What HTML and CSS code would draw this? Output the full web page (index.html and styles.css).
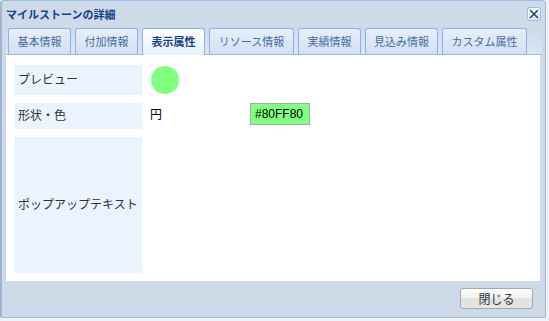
FILE: index.html
```html
<!DOCTYPE html>
<html lang="ja">
<head>
<meta charset="utf-8">
<link rel="stylesheet" href="styles.css">
</head>
<body>
<div class="dialog">
  <div class="titlebar">
    <span class="title">マイルストーンの詳細</span>
    <span class="close"><svg width="10" height="10" viewBox="0 0 10 10"><path d="M1 1 L9 9 M9 1 L1 9" stroke="#15428b" stroke-width="1.6" fill="none"/></svg></span>
  </div>
  <div class="tabs">
    <div class="tab">基本情報</div>
    <div class="tab">付加情報</div>
    <div class="tab active">表示属性</div>
    <div class="tab wide">リソース情報</div>
    <div class="tab">実績情報</div>
    <div class="tab mid">見込み情報</div>
    <div class="tab wide">カスタム属性</div>
  </div>
  <div class="panel">
    <div class="row r1">
      <div class="label">プレビュー</div>
      <div class="value"><span class="circle"></span></div>
    </div>
    <div class="row r2">
      <div class="label">形状・色</div>
      <div class="value"><span class="shape">円</span><span class="swatch">#80FF80</span></div>
    </div>
    <div class="row r3">
      <div class="label">ポップアップテキスト</div>
      <div class="value"></div>
    </div>
  </div>
  <div class="footer">
    <button class="btn">閉じる</button>
  </div>
</div>
</body>
</html>
```
FILE: styles.css
```css
html, body {
  margin: 0;
  padding: 0;
}
body {
  width: 549px;
  height: 321px;
  background: #f4f0f4;
  font-family: "Noto Sans CJK JP", "Noto Sans", sans-serif;
  overflow: hidden;
}
.dialog {
  box-sizing: border-box;
  width: 546px;
  height: 318px;
  background: #cedae7;
  border: 1px solid #99bbe8;
  border-left: 2px solid #9db4d4;
  border-radius: 4px 4px 2px 2px;
  display: flex;
  flex-direction: column;
}
.titlebar {
  height: 26px;
  display: flex;
  align-items: center;
  justify-content: space-between;
  padding: 0 4px 0 4px;
}
.title {
  font-size: 11px;
  font-weight: bold;
  color: #15428b;
  line-height: 14px;
  margin-bottom: 1px;
}
.close {
  box-sizing: border-box;
  width: 14px;
  height: 14px;
  border: 1px solid #99bbe8;
  border-radius: 3px;
  background: linear-gradient(#ffffff, #dde7f4);
  display: flex;
  align-items: center;
  justify-content: center;
}
.tabs {
  margin: 0 3px 0 4px;
  height: 28px;
  box-sizing: border-box;
  background: linear-gradient(#cad9ec, #dbe6f4);
  border-bottom: 1px solid #99bbe8;
  display: flex;
  align-items: flex-end;
  gap: 4px;
  padding-left: 2px;
}
.tab {
  box-sizing: border-box;
  width: 63px;
  height: 26px;
  border: 1px solid #8db2e3;
  border-bottom: none;
  border-radius: 3px 3px 0 0;
  background: linear-gradient(#e6eefa, #d2e0f2);
  color: #4a6c9c;
  font-size: 11px;
  display: flex;
  align-items: center;
  justify-content: center;
  padding-bottom: 2px;
}
.tab.wide { width: 85px; }
.tab.mid { width: 73px; }
.tab.active {
  background: linear-gradient(#ffffff, #e8f0fb);
  color: #15428b;
  font-weight: bold;
  height: 27px;
  margin-bottom: -1px;
  padding-bottom: 3px;
}
.panel {
  margin: 0 4px 0 4px;
  width: 534px;
  height: 226px;
  background: #ffffff;
  box-sizing: border-box;
  padding: 10px 8px 8px 8px;
  display: flex;
  flex-direction: column;
  gap: 8px;
}
.row {
  display: flex;
  gap: 8px;
}
.r1 { height: 30px; }
.r2 { height: 26px; }
.r3 { height: 136px; }
.label {
  width: 128px;
  background: #ebf3fe;
  font-size: 12px;
  color: #333333;
  display: flex;
  align-items: center;
  padding-left: 4px;
  padding-bottom: 3px;
  box-sizing: border-box;
}
.value {
  display: flex;
  align-items: center;
  font-size: 12px;
  color: #000;
}
.circle {
  width: 28px;
  height: 28px;
  border-radius: 50%;
  background: #80ff80;
  margin-left: 1px;
}
.shape {
  width: 100px;
  margin-top: -5px;
}
.swatch {
  box-sizing: border-box;
  width: 60px;
  height: 22px;
  background: #80ff80;
  border: 1px solid #a8a8b8;
  font-family: "Liberation Sans", Arial, sans-serif;
  font-size: 12px;
  display: flex;
  align-items: center;
  padding-left: 4px;
  margin-top: -4px;
}
.footer {
  flex: 1;
  display: flex;
  justify-content: flex-end;
  align-items: flex-start;
  padding: 7px 12px 0 0;
}
.btn {
  box-sizing: border-box;
  width: 73px;
  height: 21px;
  border: 1px solid #a8a8a8;
  border-radius: 3px;
  background: linear-gradient(#fdfdfd 0%, #f2f2f2 50%, #e2e2e2 50%, #e6e6e6 100%);
  font-family: "Noto Sans CJK JP", sans-serif;
  font-size: 12px;
  color: #333;
  padding: 0;
  line-height: 18px;
}
```
